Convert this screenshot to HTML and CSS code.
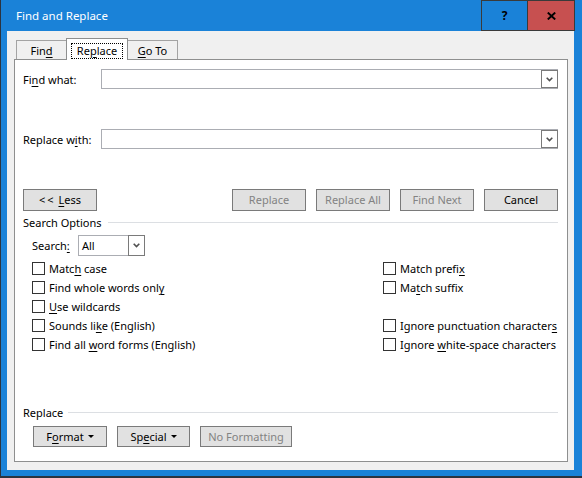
FILE: index.html
```html
<!DOCTYPE html>
<html>
<head>
<meta charset="utf-8">
<link rel="stylesheet" href="styles.css">
</head>
<body>
<div class="window">
  <div class="titlebar">
    <span class="title">Find and Replace</span>
    <div class="caption">
      <div class="cap help">?</div>
      <div class="cap close">
        <svg width="9" height="8" viewBox="0 0 9 8"><path d="M0.8 0.6 L8.2 7.4 M8.2 0.6 L0.8 7.4" stroke="#000" stroke-width="2" fill="none"/></svg>
      </div>
    </div>
  </div>
  <div class="client">
    <div class="tabs">
      <div class="tab tab-find"><span>Fin<u>d</u></span></div>
      <div class="tab tab-active"><span class="focus">Re<u>p</u>lace</span></div>
      <div class="tab tab-goto"><span><u>G</u>o To</span></div>
    </div>
    <div class="panel">
      <div class="field-row">
        <span class="field-label">Fi<u>n</u>d what:</span>
        <div class="combo">
          <div class="combo-drop"><svg width="7" height="5" viewBox="0 0 7 5"><polyline points="0.7,0.8 3.5,3.6 6.3,0.8" stroke="#505050" stroke-width="1.6" fill="none"/></svg></div>
        </div>
      </div>
      <div class="field-row field-second">
        <span class="field-label">Replace w<u>i</u>th:</span>
        <div class="combo">
          <div class="combo-drop"><svg width="7" height="5" viewBox="0 0 7 5"><polyline points="0.7,0.8 3.5,3.6 6.3,0.8" stroke="#505050" stroke-width="1.6" fill="none"/></svg></div>
        </div>
      </div>
      <div class="actions">
        <div class="btn"><span><span class="chev">&lt;&lt;</span> <u>L</u>ess</span></div>
        <div class="actions-right">
          <div class="btn disabled"><span>Replace</span></div>
          <div class="btn disabled"><span>Replace All</span></div>
          <div class="btn disabled"><span>Find Next</span></div>
          <div class="btn"><span>Cancel</span></div>
        </div>
      </div>
      <div class="group-head">
        <span>Search Options</span>
        <div class="line line-search"></div>
      </div>
      <div class="search-row">
        <span class="search-label">Search<u>:</u></span>
        <div class="select">
          <div class="select-val">All</div>
          <div class="select-drop"><svg width="7" height="5" viewBox="0 0 7 5"><polyline points="0.7,0.8 3.5,3.6 6.3,0.8" stroke="#505050" stroke-width="1.6" fill="none"/></svg></div>
        </div>
      </div>
      <div class="options">
        <div class="opt"><span class="box"></span><span>Matc<u>h</u> case</span></div>
        <div class="opt"><span class="box"></span><span>Match prefi<u>x</u></span></div>
        <div class="opt"><span class="box"></span><span>Find whole words onl<u>y</u></span></div>
        <div class="opt"><span class="box"></span><span>Ma<u>t</u>ch suffix</span></div>
        <div class="opt"><span class="box"></span><span><u>U</u>se wildcards</span></div>
        <div class="opt"></div>
        <div class="opt"><span class="box"></span><span>Sounds li<u>k</u>e (English)</span></div>
        <div class="opt"><span class="box"></span><span>Ignore punctuation character<u>s</u></span></div>
        <div class="opt"><span class="box"></span><span>Find all <u>w</u>ord forms (English)</span></div>
        <div class="opt"><span class="box"></span><span>Ignore <u>w</u>hite-space characters</span></div>
      </div>
      <div class="group-head group-replace">
        <span>Replace</span>
        <div class="line line-replace"></div>
      </div>
      <div class="bottom">
        <div class="btn btn-small btn-format"><span>F<u>o</u>rmat</span><span class="caret"></span></div>
        <div class="btn btn-small btn-special"><span>Sp<u>e</u>cial</span><span class="caret"></span></div>
        <div class="btn btn-small btn-noformat disabled"><span>No Formatting</span></div>
      </div>
    </div>
  </div>
</div>
</body>
</html>
```

FILE: styles.css
```css
* { box-sizing: border-box; }
html, body { margin: 0; padding: 0; }
body {
  width: 582px;
  height: 478px;
  overflow: hidden;
  font-family: "Noto Sans", "Open Sans", sans-serif;
  font-size: 11px;
  line-height: 15px;
  color: #000;
}
u { text-decoration-thickness: 1px; text-underline-offset: 2px; }

.window {
  width: 582px;
  height: 478px;
  background: #1a82d8;
  display: flex;
  flex-direction: column;
  box-shadow: inset 1px 0 0 #2b3440, inset 0 -2px 0 #2b3440;
}

.titlebar {
  height: 31px;
  display: flex;
  color: #fff;
  flex-shrink: 0;
}
.title {
  padding-left: 16px;
  font-size: 11.5px;
  line-height: 31px;
}
.caption {
  margin-left: auto;
  margin-right: 7px;
  display: flex;
  border: 1px solid #3a3a3a;
}
.cap {
  width: 46px;
  display: flex;
  align-items: center;
  justify-content: center;
}
.help {
  border-right: 1px solid #3a3a3a;
  font-weight: 700;
  font-size: 12px;
  color: #000;
}
.close {
  width: 46px;
  background: #c75050;
}

.client {
  flex: 1;
  margin: 0 8px 8px 7px;
  background: #f0f0f0;
  display: flex;
  flex-direction: column;
  padding: 7px 6px 8px 7px;
}

.tabs {
  display: flex;
  align-items: flex-end;
  height: 21px;
  margin-left: 2px;
  flex-shrink: 0;
}
.tab {
  height: 19px;
  border: 1px solid #a3a3a3;
  border-bottom: none;
  background: #f0f0f0;
  display: flex;
  align-items: center;
  justify-content: center;
  padding-top: 1px;
}
.tab-find { width: 51px; }
.tab-goto { width: 51px; margin-left: -1px; }
.tab-active {
  width: 62px;
  height: 22px;
  margin-left: -1px;
  margin-bottom: -1px;
  background: #fff;
  border-color: #8e8f8f;
  position: relative;
  z-index: 1;
  padding-top: 2px;
}
.focus {
  outline: 1px dotted #000;
  padding: 0 5px;
  line-height: 14px;
}

.panel {
  flex: 1;
  background: #fff;
  border: 1px solid #8e8f8f;
  display: flex;
  flex-direction: column;
  padding: 9px 9px 0 8px;
}

.field-row {
  display: flex;
  align-items: center;
  height: 20px;
}
.field-second { margin-top: 40px; }
.field-label { width: 78px; }
.combo {
  flex: 1;
  height: 20px;
  border: 1px solid #abadb3;
  display: flex;
  justify-content: flex-end;
}
.combo-drop {
  width: 17px;
  height: 18px;
  margin-right: -1px;
  border: 1px solid #7a7a7a;
  background: #fff;
  display: flex;
  align-items: center;
  justify-content: center;
}

.actions {
  display: flex;
  margin-top: 40px;
}
.actions-right {
  margin-left: auto;
  display: flex;
  gap: 10px;
}
.btn {
  width: 74px;
  height: 22px;
  border: 1px solid #7a7a7a;
  background: #e1e1e1;
  display: flex;
  align-items: center;
  justify-content: center;
  white-space: nowrap;
  padding-bottom: 1px;
}
.chev { letter-spacing: 2px; }
.disabled { color: #838383; }

.group-head {
  display: flex;
  align-items: center;
  height: 16px;
  margin-top: 3px;
}
.line {
  flex: 1;
  height: 1px;
  background: #dcdfe3;
}
.line-search { margin-left: 6px; }
.line-replace { margin-left: 5px; }
.group-replace { margin-top: 50px; }

.search-row {
  display: flex;
  align-items: center;
  margin-top: 5px;
  padding-left: 9px;
  height: 21px;
}
.search-label { width: 46px; }
.select {
  width: 67px;
  height: 21px;
  display: flex;
}
.select-val {
  flex: 1;
  border: 1px solid #abadb3;
  border-right: none;
  padding-left: 3px;
  line-height: 19px;
}
.select-drop {
  width: 17px;
  height: 21px;
  border: 1px solid #7a7a7a;
  display: flex;
  align-items: center;
  justify-content: center;
}

.options {
  display: grid;
  grid-template-columns: 351px 1fr;
  grid-auto-rows: 19px;
  margin-top: 3px;
  padding-left: 9px;
}
.opt {
  display: flex;
  align-items: center;
  gap: 4px;
  white-space: nowrap;
}
.box {
  width: 13px;
  height: 13px;
  border: 1px solid #333;
  background: #fff;
  flex-shrink: 0;
}

.bottom {
  display: flex;
  margin-top: 6px;
  padding-left: 10px;
}
.btn-small { height: 21px; }
.btn-format { width: 74px; }
.btn-special { width: 73px; margin-left: 10px; }
.btn-noformat { width: 92px; margin-left: 10px; }
.caret {
  display: inline-block;
  width: 0;
  height: 0;
  border-left: 3px solid transparent;
  border-right: 3px solid transparent;
  border-top: 3px solid #000;
  margin-left: 4px;
}
```
